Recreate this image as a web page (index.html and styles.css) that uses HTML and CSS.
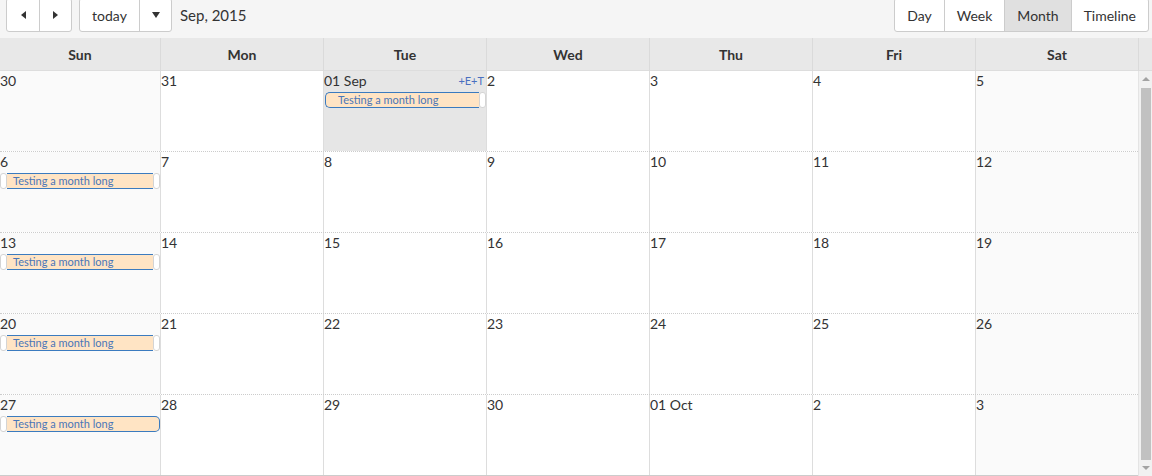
FILE: index.html
```html
<!DOCTYPE html>
<html>
<head>
    <title>Calendar</title>
    <link rel="stylesheet" href="styles.css">
</head>
<body>
    <div class="toolbar">
        <div class="btn-group">
            <button class="btn"><span class="tri tri-left"></span></button>
            <button class="btn"><span class="tri tri-right"></span></button>
        </div>
        <div class="btn-group">
            <button class="btn btn-today">today</button>
            <button class="btn"><span class="tri tri-down"></span></button>
        </div>
        <div class="title">Sep, 2015</div>
        <div class="spacer"></div>
        <div class="btn-group">
            <button class="btn btn-view">Day</button>
            <button class="btn btn-view">Week</button>
            <button class="btn btn-view active">Month</button>
            <button class="btn btn-view">Timeline</button>
        </div>
    </div>

    <div class="cal-head">
        <div class="hcell">Sun</div>
        <div class="hcell">Mon</div>
        <div class="hcell">Tue</div>
        <div class="hcell">Wed</div>
        <div class="hcell">Thu</div>
        <div class="hcell">Fri</div>
        <div class="hcell">Sat</div>
        <div class="hcell hcell-scroll"></div>
    </div>

    <div class="cal-body">
        <div class="weeks">
            <div class="week">
                <div class="cell weekend"><div class="num">30</div></div>
                <div class="cell"><div class="num">31</div></div>
                <div class="cell today">
                    <div class="num">01 Sep<span class="more">+E+T</span></div>
                    <div class="evt-row">
                        <div class="evt evt-start">Testing a month long</div>
                        <div class="cap"></div>
                    </div>
                </div>
                <div class="cell"><div class="num">2</div></div>
                <div class="cell"><div class="num">3</div></div>
                <div class="cell"><div class="num">4</div></div>
                <div class="cell weekend"><div class="num">5</div></div>
            </div>
            <div class="week">
                <div class="cell weekend">
                    <div class="num">6</div>
                    <div class="evt-row">
                        <div class="cap"></div>
                        <div class="evt evt-mid">Testing a month long</div>
                        <div class="cap"></div>
                    </div>
                </div>
                <div class="cell"><div class="num">7</div></div>
                <div class="cell"><div class="num">8</div></div>
                <div class="cell"><div class="num">9</div></div>
                <div class="cell"><div class="num">10</div></div>
                <div class="cell"><div class="num">11</div></div>
                <div class="cell weekend"><div class="num">12</div></div>
            </div>
            <div class="week">
                <div class="cell weekend">
                    <div class="num">13</div>
                    <div class="evt-row">
                        <div class="cap"></div>
                        <div class="evt evt-mid">Testing a month long</div>
                        <div class="cap"></div>
                    </div>
                </div>
                <div class="cell"><div class="num">14</div></div>
                <div class="cell"><div class="num">15</div></div>
                <div class="cell"><div class="num">16</div></div>
                <div class="cell"><div class="num">17</div></div>
                <div class="cell"><div class="num">18</div></div>
                <div class="cell weekend"><div class="num">19</div></div>
            </div>
            <div class="week">
                <div class="cell weekend">
                    <div class="num">20</div>
                    <div class="evt-row">
                        <div class="cap"></div>
                        <div class="evt evt-mid">Testing a month long</div>
                        <div class="cap"></div>
                    </div>
                </div>
                <div class="cell"><div class="num">21</div></div>
                <div class="cell"><div class="num">22</div></div>
                <div class="cell"><div class="num">23</div></div>
                <div class="cell"><div class="num">24</div></div>
                <div class="cell"><div class="num">25</div></div>
                <div class="cell weekend"><div class="num">26</div></div>
            </div>
            <div class="week last">
                <div class="cell weekend">
                    <div class="num">27</div>
                    <div class="evt-row">
                        <div class="cap"></div>
                        <div class="evt evt-end">Testing a month long</div>
                    </div>
                </div>
                <div class="cell"><div class="num">28</div></div>
                <div class="cell"><div class="num">29</div></div>
                <div class="cell"><div class="num">30</div></div>
                <div class="cell"><div class="num">01 Oct</div></div>
                <div class="cell"><div class="num">2</div></div>
                <div class="cell weekend"><div class="num">3</div></div>
            </div>
        </div>
        <div class="scrollbar">
            <div class="arrow arrow-up"></div>
            <div class="thumb"></div>
            <div class="arrow arrow-down"></div>
        </div>
    </div>
</body>
</html>
```

FILE: styles.css
```css
body {
    margin: 0;
    font-family: Lato, "Open Sans", sans-serif;
    color: #333;
    background: #fff;
    overflow: hidden;
}

/* toolbar */
.toolbar {
    display: flex;
    align-items: flex-start;
    gap: 7px;
    height: 38px;
    padding: 0 3px 0 6px;
    background: #f5f5f5;
    box-sizing: border-box;
}
.btn-group {
    display: flex;
    margin-top: -2px;
    background: #fff;
    border: 1px solid #ccc;
    border-radius: 3px;
}
.btn {
    height: 32px;
    padding: 0;
    width: 32px;
    border: none;
    border-left: 1px solid #ccc;
    background: transparent;
    font-family: inherit;
    font-size: 14px;
    color: #333;
    display: flex;
    align-items: center;
    justify-content: center;
}
.btn:first-child {
    border-left: none;
}
.btn-today {
    width: 59px;
}
.btn-view {
    width: auto;
    padding: 0 12px;
}
.btn-view.active {
    background: #e0e0e0;
}
.title {
    font-size: 15px;
    line-height: 31px;
    margin-left: 1px;
}
.spacer {
    flex: 1;
}
.tri {
    width: 0;
    height: 0;
    border-style: solid;
    border-color: transparent;
}
.tri-left {
    border-width: 4px 5px 4px 0;
    border-right-color: #333;
}
.tri-right {
    border-width: 4px 0 4px 5px;
    border-left-color: #333;
}
.tri-down {
    border-width: 6px 4px 0 4px;
    border-top-color: #333;
}

/* column headers */
.cal-head {
    display: grid;
    grid-template-columns: 160px repeat(6, 163px) 14px;
    height: 33px;
    background: #e8e8e8;
    border-bottom: 1px solid #ddd;
    box-sizing: border-box;
}
.hcell {
    border-left: 1px solid #dadada;
    font-size: 14px;
    font-weight: bold;
    line-height: 32px;
    padding-top: 1px;
    text-align: center;
}
.hcell:first-child {
    border-left: none;
}

/* month grid */
.cal-body {
    display: flex;
}
.weeks {
    width: 1138px;
}
.week {
    display: grid;
    grid-template-columns: 160px repeat(6, 163px);
    height: 81px;
    border-bottom: 1px dotted #ccc;
    box-sizing: border-box;
}
.week.last {
    border-bottom: 1px solid #ccc;
}
.cell {
    border-left: 1px solid #ddd;
    background: #fff;
    min-width: 0;
}
.cell:first-child {
    border-left: none;
}
.cell.weekend {
    background: #fafafa;
}
.cell.today {
    background: #e6e6e6;
}
.num {
    display: flex;
    justify-content: space-between;
    font-size: 14px;
    line-height: 19px;
}
.more {
    font-size: 11px;
    color: #4a6fc0;
    padding-right: 2px;
}

/* event bars */
.evt-row {
    display: flex;
    height: 16px;
    margin-top: 2px;
}
.evt {
    flex: 1;
    min-width: 0;
    box-sizing: border-box;
    background: #ffe4c4;
    border-top: 1px solid #3b7bbf;
    border-bottom: 1px solid #3b7bbf;
    color: #4a76b8;
    font-size: 11px;
    line-height: 14px;
    white-space: nowrap;
    overflow: hidden;
}
.evt-start {
    margin-left: 1px;
    padding-left: 12px;
    border-left: 1px solid #3b7bbf;
    border-radius: 5px 0 0 5px;
}
.evt-mid {
    padding-left: 6px;
}
.evt-end {
    padding-left: 6px;
    border-right: 1px solid #3b7bbf;
    border-radius: 0 5px 5px 0;
}
.cap {
    width: 7px;
    box-sizing: border-box;
    background: #fff;
    border: 1px solid #d4d4d4;
    border-radius: 3px;
}

/* scrollbar */
.scrollbar {
    width: 14px;
    height: 405px;
    background: #f1f1f1;
    border-left: 1px solid #e4e4e4;
    box-sizing: border-box;
    display: flex;
    flex-direction: column;
    align-items: center;
}
.arrow {
    width: 0;
    height: 0;
    border-style: solid;
    border-color: transparent;
    margin: 6px 0;
}
.arrow-up {
    margin-top: 6px;
    border-width: 0 4px 4px 4px;
    border-bottom-color: #a3a3a3;
}
.arrow-down {
    border-width: 4px 4px 0 4px;
    border-top-color: #a3a3a3;
}
.thumb {
    width: 10px;
    flex: 1;
    background: #c1c1c1;
    margin-top: 1px;
}
```
